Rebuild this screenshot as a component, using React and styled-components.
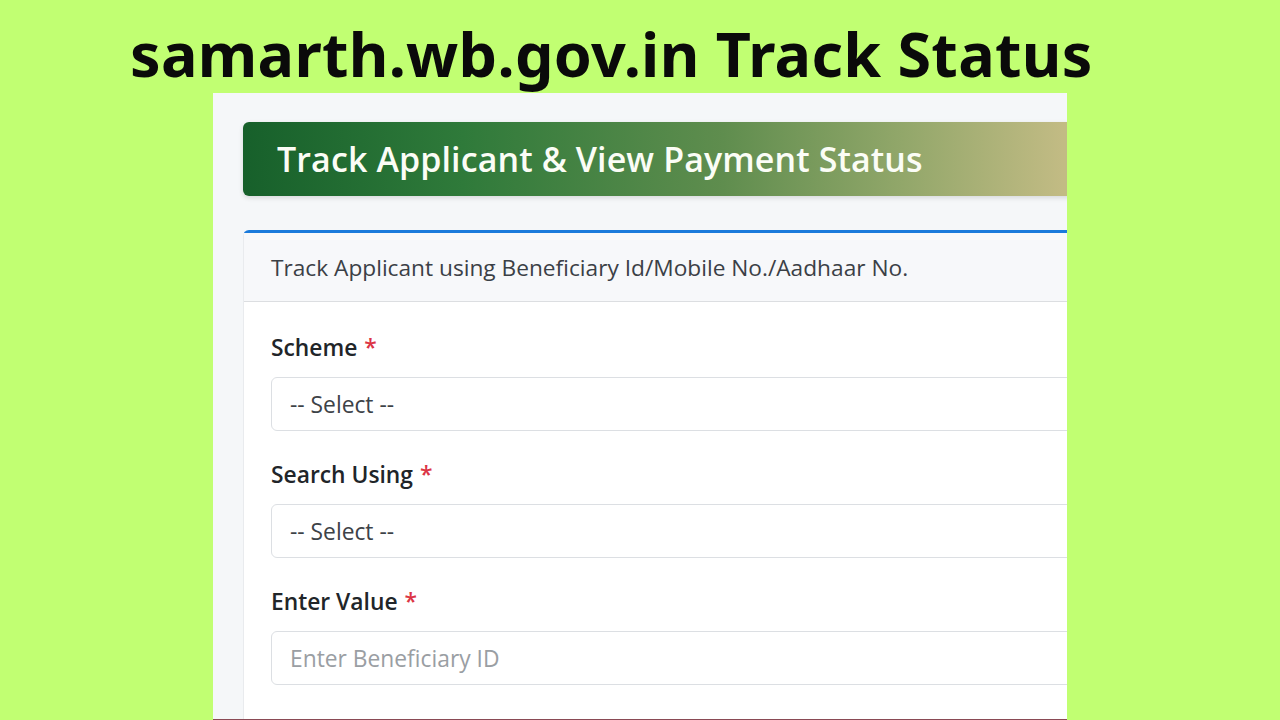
import React from 'react';
import styled, { createGlobalStyle } from 'styled-components';

const GlobalStyle = createGlobalStyle`
  html, body {
    margin: 0;
    padding: 0;
    background: #c1ff72;
  }
  body {
    width: 1280px;
    height: 720px;
    overflow: hidden;
    font-family: "Open Sans", "Noto Sans", sans-serif;
  }
`;

const Page = styled.div`
  width: 1280px;
  height: 720px;
  display: flex;
  flex-direction: column;
  background: #c1ff72;
`;

const Title = styled.h1`
  margin: 0;
  padding: 19px 0 0 130px;
  height: 93px;
  flex-shrink: 0;
  box-sizing: border-box;
  font-family: "Noto Sans", sans-serif;
  font-weight: 700;
  font-size: 61px;
  line-height: 70px;
  color: #0a0a0a;
  letter-spacing: 0.3px;
  white-space: nowrap;
`;

const Shot = styled.div`
  margin-left: 213px;
  width: 854px;
  flex: 1;
  background: #f5f7f9;
  overflow: hidden;
  padding: 29px 0 0 30px;
  box-sizing: border-box;
  display: flex;
  border-bottom: 1px solid #8a4a55;
`;

const Inner = styled.div`
  width: 1000px;
  flex-shrink: 0;
  display: flex;
  flex-direction: column;
  gap: 34px;
`;

const Banner = styled.div`
  height: 74px;
  flex-shrink: 0;
  border-radius: 6px;
  display: flex;
  align-items: center;
  padding-left: 34px;
  background: linear-gradient(90deg, #17602b 0%, #2f7a3a 22%, #5f8d4e 48%, #92a76a 66%, #c2bb84 82%, #c2bb84 100%);
  box-shadow: 0 2px 5px rgba(0, 0, 0, 0.12);
  color: #fbfdf6;
  font-size: 34px;
  font-weight: 600;
  letter-spacing: 0.1px;
  white-space: nowrap;
`;

const Card = styled.div`
  flex: 1;
  background: #fff;
  border-top: 3px solid #1a7adb;
  border-left: 1px solid #e9ebee;
  border-radius: 6px 0 0 0;
`;

const CardHead = styled.div`
  height: 68px;
  display: flex;
  align-items: center;
  padding-left: 27px;
  background: #f7f8fa;
  border-bottom: 1px solid #dcdee1;
  color: #3b4046;
  font-size: 22.7px;
  white-space: nowrap;
`;

const CardBody = styled.div`
  padding: 32px 0 0 27px;
  display: flex;
  flex-direction: column;
`;

const Field = styled.div`
  display: flex;
  flex-direction: column;
  gap: 15px;
  margin-bottom: 30px;
`;

const Label = styled.label`
  font-size: 22.8px;
  font-weight: 600;
  line-height: 28px;
  color: #212529;
`;

const Req = styled.span`
  color: #dc3545;
  margin-left: 7px;
`;

const Box = styled.div`
  height: 54px;
  box-sizing: border-box;
  border: 1px solid #dcdfe3;
  border-radius: 6px;
  display: flex;
  align-items: center;
  padding-left: 18px;
  font-size: 22.8px;
  color: ${(p) => (p.$placeholder ? '#9a9ea3' : '#3d4247')};
  background: #fff;
`;

const fields = [
  { label: 'Scheme', value: '-- Select --' },
  { label: 'Search Using', value: '-- Select --' },
  { label: 'Enter Value', value: 'Enter Beneficiary ID', placeholder: true },
];

export default function App() {
  return (
    <Page>
      <GlobalStyle />
      <Title>samarth.wb.gov.in Track Status</Title>
      <Shot>
        <Inner>
          <Banner>Track Applicant &amp; View Payment Status</Banner>
          <Card>
            <CardHead>Track Applicant using Beneficiary Id/Mobile No./Aadhaar No.</CardHead>
            <CardBody>
              {fields.map((f) => (
                <Field key={f.label}>
                  <Label>
                    {f.label}
                    <Req>*</Req>
                  </Label>
                  <Box $placeholder={f.placeholder}>{f.value}</Box>
                </Field>
              ))}
            </CardBody>
          </Card>
        </Inner>
      </Shot>
    </Page>
  );
}
